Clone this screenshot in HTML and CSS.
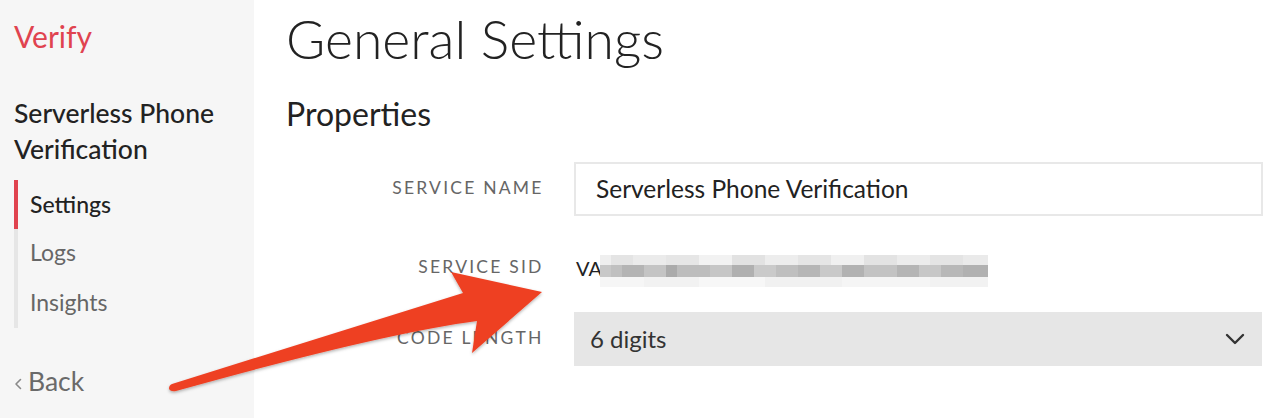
FILE: index.html
```html
<!DOCTYPE html>
<html lang="en">
<head>
<meta charset="utf-8">
<title>General Settings</title>
<link rel="stylesheet" href="styles.css">
</head>
<body>
<div class="page">
  <aside class="sidebar">
    <div class="product">Verify</div>
    <div class="service-name">Serverless Phone Verification</div>
    <nav class="nav">
      <a class="nav-item active">Settings</a>
      <a class="nav-item">Logs</a>
      <a class="nav-item">Insights</a>
    </nav>
    <a class="back"><svg class="back-chev" width="8" height="12" viewBox="0 0 8 12"><path d="M6.5 1.5 L2 6 L6.5 10.5" fill="none" stroke="#8a8a8a" stroke-width="1.6" stroke-linecap="round" stroke-linejoin="round"/></svg><span>Back</span></a>
  </aside>
  <main class="main">
    <h1 class="title">General Settings</h1>
    <h2 class="subtitle">Properties</h2>
    <div class="form">
      <div class="row row-field">
        <label class="label">SERVICE NAME</label>
        <div class="input">Serverless Phone Verification</div>
      </div>
      <div class="row row-sid">
        <label class="label">SERVICE SID</label>
        <div class="sid"><span class="sid-text">VA</span><span class="sid-blur"></span></div>
      </div>
      <div class="row row-field">
        <label class="label">CODE LENGTH</label>
        <div class="select"><span>6 digits</span>
          <svg class="chev" width="20" height="12" viewBox="0 0 20 12"><path d="M2 2 L10 10 L18 2" fill="none" stroke="#333" stroke-width="2.4" stroke-linecap="round" stroke-linejoin="round"/></svg>
        </div>
      </div>
    </div>
  </main>
  <svg class="arrow" width="1286" height="418" viewBox="0 0 1286 418">
    <defs>
      <filter id="sh" x="-10%" y="-10%" width="120%" height="130%">
        <feDropShadow dx="0" dy="1.5" stdDeviation="1.5" flood-color="#000" flood-opacity="0.3"/>
      </filter>
    </defs>
    <path filter="url(#sh)" fill="#ee4024" d="M172 384 L463 293 L451 272 L542 292 L472 353 L477 321 Q380 334 176 391 Q170 392 169 388.5 Q169 385 172 384 Z"/>
  </svg>
</div>
</body>
</html>
```
FILE: styles.css
```css
* { box-sizing: border-box; }
html, body { margin: 0; padding: 0; }
body {
  font-family: Lato, "Noto Sans", sans-serif;
  color: #222;
  background: #fff;
  width: 1286px;
  height: 418px;
  overflow: hidden;
}
.page {
  position: relative;
  display: flex;
  height: 418px;
}
.sidebar {
  width: 254px;
  flex: none;
  background: #f6f6f6;
  padding: 18px 0 0 14px;
  display: flex;
  flex-direction: column;
}
.product {
  color: #e0434f;
  font-size: 30px;
  line-height: 36px;
}
.service-name {
  margin-top: 41px;
  font-size: 26.5px;
  line-height: 36px;
  font-weight: 500;
  color: #222;
  width: 230px;
}
.nav {
  margin-top: 13px;
  display: flex;
  flex-direction: column;
  border-left: 4px solid #e6e6e6;
}
.nav-item {
  display: block;
  height: 49.3px;
  line-height: 46px;
  padding-left: 12px;
  font-size: 23px;
  color: #666;
  margin-left: -4px;
  border-left: 4px solid transparent;
}
.nav-item.active {
  border-left-color: #e0434f;
  color: #222;
  font-weight: 500;
  line-height: 48px;
}
.back {
  margin-top: 37px;
  font-size: 26.5px;
  color: #6a6a6a;
  line-height: 32px;
  display: flex;
  align-items: center;
}
.back-chev {
  display: block;
  margin: 6px 6px 0 0;
}
.main {
  flex: 1;
  padding: 6px 22px 0 32px;
}
.title {
  margin: 0;
  font-size: 53.5px;
  font-weight: 300;
  line-height: 1.2;
  color: #222;
}
.subtitle {
  margin: 25px 0 0;
  font-size: 32px;
  font-weight: 400;
  line-height: 1.2;
  color: #222;
}
.form {
  margin-top: 28px;
  display: flex;
  flex-direction: column;
}
.row {
  display: flex;
  align-items: center;
}
.row-field { height: 54px; }
.row-sid {
  height: 50px;
  margin: 27px 0 19px;
}
.label {
  width: 288px;
  text-align: right;
  padding-right: 30.5px;
  padding-bottom: 3px;
  font-size: 17.5px;
  letter-spacing: 2.2px;
  color: #666;
  flex: none;
}
.input {
  width: 689px;
  height: 54px;
  border: 2px solid #e8e8e8;
  padding-left: 20px;
  font-size: 24.5px;
  line-height: 50px;
  color: #222;
}
.sid {
  display: flex;
  align-items: center;
  padding-left: 2px;
  font-size: 20px;
  color: #222;
}
.sid-text { width: 24px; }
.sid-blur {
  margin-top: 6px;
  width: 388px;
  height: 32px;
  background:
    linear-gradient(90deg, #efefef 0 11px, #e4e4e4 11px 33px, #ebebeb 33px 66px, #e6e6e6 66px 99px, #f2f2f2 99px 132px, #e2e2e2 132px 165px, #ededed 165px 198px, #e5e5e5 198px 231px, #f0f0f0 231px 264px, #e3e3e3 264px 297px, #ececec 297px 330px, #e4e4e4 330px 363px, #eaeaea 363px 388px) 0 0 / 388px 10px no-repeat,
    linear-gradient(90deg, #c8c8c8 0 11px, #c0c0c0 11px 22px, #b4b4b4 22px 44px, #c4c4c4 44px 66px, #ababab 66px 77px, #bdbdbd 77px 110px, #c6c6c6 110px 132px, #b0b0b0 132px 154px, #cacaca 154px 176px, #bfbfbf 176px 198px, #b6b6b6 198px 220px, #c9c9c9 220px 242px, #b2b2b2 242px 264px, #c3c3c3 264px 297px, #b5b5b5 297px 319px, #c7c7c7 319px 341px, #b8b8b8 341px 363px, #b1b1b1 363px 388px) 0 10px / 388px 12px no-repeat,
    linear-gradient(90deg, #f6f6f6 0 44px, #f2f2f2 44px 99px, #f7f7f7 99px 165px, #f1f1f1 165px 242px, #f5f5f5 242px 330px, #f2f2f2 330px 388px) 0 22px / 388px 10px no-repeat;
}
.select {
  width: 688px;
  height: 54px;
  background: #e6e6e6;
  display: flex;
  align-items: center;
  justify-content: space-between;
  padding: 0 17px 0 16px;
  font-size: 24px;
  color: #333;
}
.chev { display: block; }
.arrow {
  position: absolute;
  left: 0;
  top: 0;
  pointer-events: none;
}
```
